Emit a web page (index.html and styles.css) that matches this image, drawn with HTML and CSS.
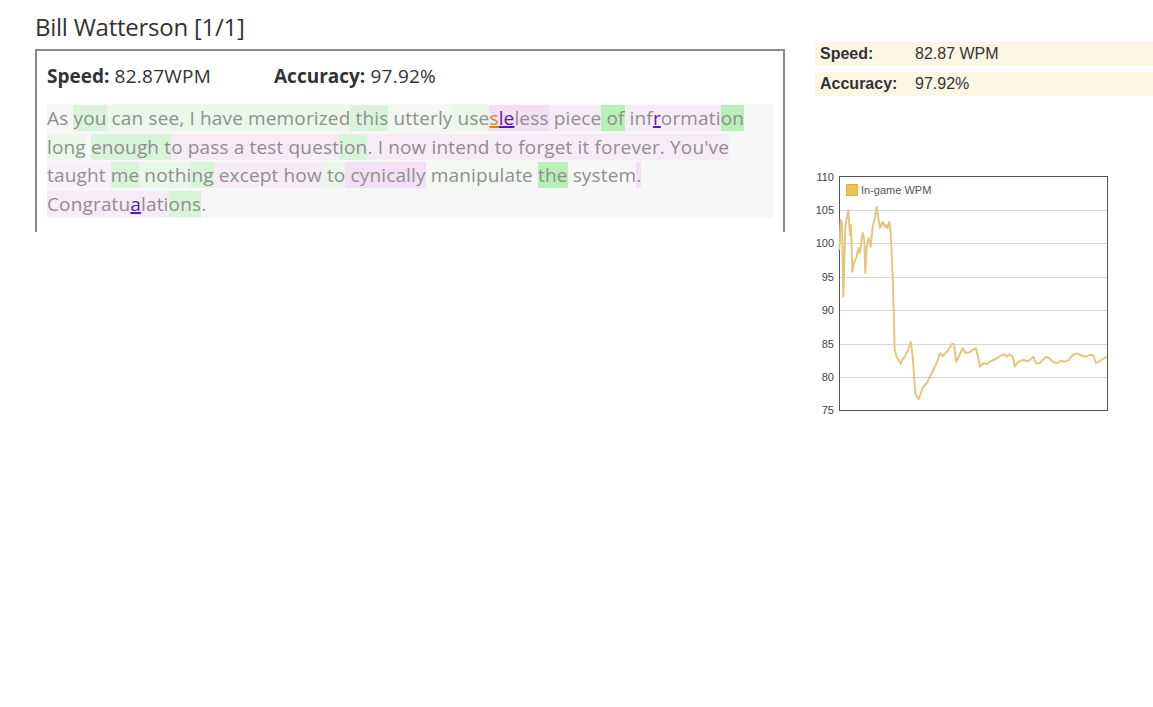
FILE: index.html
```html
<!DOCTYPE html>
<html>
<head>
<meta charset="utf-8">
<link rel="stylesheet" href="styles.css">
</head>
<body>
<div class="page">
  <div class="main">
    <h1 class="title">Bill Watterson [1/1]</h1>
    <div class="box">
      <div class="stats">
        <div class="stat stat-speed"><b>Speed:</b> 82.87WPM</div>
        <div class="stat"><b>Accuracy:</b> 97.92%</div>
      </div>
      <div class="passage"><span>As </span><span class="g2">you</span><span class="g1"> can see, I have memorized</span><span class="g2"> this</span><span class="g0"> utterly</span><span class="g1"> use</span><span class="p2"><u class="err-o">s</u><u class="err-p">le</u>less</span><span class="p1"> piece</span><span class="g3"> of</span><span class="p1"> inf<u class="err-p">r</u>ormati</span><span class="g3">on</span><br><span class="g1">long</span> <span class="g2">enough t</span><span class="p1">o pass a test quest</span><span class="g2">ion</span><span class="p1">. I now intend to forget it forever. You've</span><br><span class="p0">taught </span><span class="g2">me</span><span class="g1"> nothi</span><span class="g2">ng</span><span class="p1"> except how</span><span class="g1"> to</span><span class="p2"> cynically</span><span class="g0"> manipulate </span><span class="g3">the</span><span> system</span><span class="p2">.</span><br><span class="p1">Congratu<u class="err-p">a</u>lati</span><span class="g2">ons</span><span>.</span></div>
    </div>
  </div>
  <div class="side">
    <table class="summary">
      <tr><th>Speed:</th><td>82.87 WPM</td></tr>
      <tr><th>Accuracy:</th><td>97.92%</td></tr>
    </table>
    <svg class="chart" width="300" height="245" viewBox="812 170 300 245">
      <g class="ylabels">
        <text x="834" y="181">110</text>
        <text x="834" y="214">105</text>
        <text x="834" y="247">100</text>
        <text x="834" y="281">95</text>
        <text x="834" y="314">90</text>
        <text x="834" y="348">85</text>
        <text x="834" y="381">80</text>
        <text x="834" y="414">75</text>
      </g>
      <g class="grid">
        <line x1="840" y1="210.5" x2="1107" y2="210.5"/>
        <line x1="840" y1="243.5" x2="1107" y2="243.5"/>
        <line x1="840" y1="277.5" x2="1107" y2="277.5"/>
        <line x1="840" y1="310.5" x2="1107" y2="310.5"/>
        <line x1="840" y1="344.5" x2="1107" y2="344.5"/>
        <line x1="840" y1="377.5" x2="1107" y2="377.5"/>
      </g>
      <rect class="plot" x="839.5" y="176.5" width="268" height="234"/>
      <polyline class="wpm" points="839.3,250 840.7,220 842,223 843.3,296.7 844.3,260 845.3,226.7 848.3,210 850,235 851,225 852.3,271.7 854,263 856.7,256.7 858.3,248 860,253 862.7,232.7 864.3,240 865.3,273 866.7,246.7 868.7,238 870.7,246.7 872.7,226.7 875,216.7 876.7,206.7 878.7,220 880,228 882.7,221.7 884.7,226.7 886,225 887.3,228 889.3,221.7 890.7,233 892.7,276.7 894.7,350 896.7,356.7 898.7,360 900.7,364 902.7,359 904.7,357 907.3,351.7 910.7,341.7 912.7,356.7 915.3,393.3 917.3,397.3 918.7,399.3 920.7,393.3 923.3,386.7 926.7,383.3 930,376.7 933.3,370 936.7,363.3 940,353.3 942.7,356 945.3,353.3 948.7,349.3 952,344 954,344 956,361.7 958.7,356.7 962.7,348.3 965.3,352.7 969.3,352.7 972.7,350 976,348.3 978,356.7 980,366.7 983.3,363.3 986.7,364 990,361.7 993.3,360 996.7,358.3 999.3,356.7 1002,355 1004.7,354.3 1006.7,356.7 1009.3,354.3 1012.7,356.7 1014.7,366.7 1017.3,362.7 1020.7,360.7 1024,360 1026.7,361.3 1030,360 1033.3,356.7 1036,363.3 1039.3,363.3 1042.7,360 1046,356.7 1049.3,358.3 1052.7,361.7 1056.7,363.3 1060.7,361 1064.7,361.7 1068.7,360 1072.7,355 1076.7,353.3 1080.7,355 1084,356.7 1087.3,356 1090,355 1093.3,355 1096,363.3 1098.7,361.7 1101.3,360 1104,358.3 1106.7,356.7"/>
      <rect class="legend-swatch" x="846.5" y="184.5" width="11" height="11"/>
      <text class="legend-text" x="861" y="194">In-game WPM</text>
    </svg>
  </div>
</div>
</body>
</html>
```

FILE: styles.css
```css
html, body {
  margin: 0;
  padding: 0;
  background: #ffffff;
}

.page {
  display: flex;
  align-items: flex-start;
  padding: 11px 0 0 35px;
  font-family: "Open Sans", "DejaVu Sans", sans-serif;
  color: #333;
}

.main {
  width: 750px;
  flex: none;
}

.title {
  font-size: 24px;
  font-weight: normal;
  line-height: 31px;
  margin: 0 0 7px 0;
  color: #333;
  letter-spacing: -0.25px;
}

.box {
  border: 2px solid #8a8a8a;
  border-bottom: none;
  padding: 11px 10px 0 10px;
  box-sizing: border-box;
  height: 183px;
}

.stats {
  display: flex;
  font-size: 19px;
  line-height: 28px;
  color: #333;
  letter-spacing: 0.25px;
}

.stat-speed {
  width: 227px;
}

.stat b {
  font-weight: 700;
  letter-spacing: 0;
}

.passage {
  margin-top: 14px;
  background: #f7f7f7;
  font-size: 19px;
  line-height: 28.5px;
  color: #8f8f8f;
  white-space: nowrap;
  letter-spacing: 0.15px;
}

.g0 { background: #f3f8f3; }
.g1 { background: #ebf7eb; }
.g2 { background: #d9f5d9; }
.g3 { background: #b9efb9; }
.p0 { background: #f8f2f8; }
.p1 { background: #f6ecf6; }
.p2 { background: #f4e0f4; }

.err-o {
  color: #d08a10;
  text-decoration: underline;
  text-decoration-thickness: 2px;
}

.err-p {
  color: #5a1ab0;
  text-decoration: underline;
  text-decoration-thickness: 2px;
}

.side {
  margin-left: 30px;
  flex: 1;
  display: flex;
  flex-direction: column;
}

.summary {
  border-collapse: separate;
  border-spacing: 0 6px;
  margin-top: 25px;
  width: 100%;
  font-family: "Liberation Sans", Arial, sans-serif;
  font-size: 16px;
  color: #333;
}

.summary th,
.summary td {
  background: #fcf6e4;
  height: 24px;
  padding: 0;
  text-align: left;
}

.summary th {
  width: 95px;
  padding-left: 5px;
  font-weight: bold;
}

.chart {
  display: block;
  margin-top: 68px;
  margin-left: -3px;
  font-family: "Liberation Sans", Arial, sans-serif;
}

.ylabels text {
  font-size: 11px;
  fill: #444;
  text-anchor: end;
}

.grid line {
  stroke: #d6d6d6;
  stroke-width: 1;
}

.plot {
  fill: none;
  stroke: #555;
  stroke-width: 1;
}

.wpm {
  fill: none;
  stroke: #e3c77c;
  stroke-width: 2;
  stroke-linejoin: round;
}

.legend-swatch {
  fill: #eac451;
  stroke: #d9b445;
  stroke-width: 1;
}

.legend-text {
  font-size: 11px;
  fill: #555;
}
```
